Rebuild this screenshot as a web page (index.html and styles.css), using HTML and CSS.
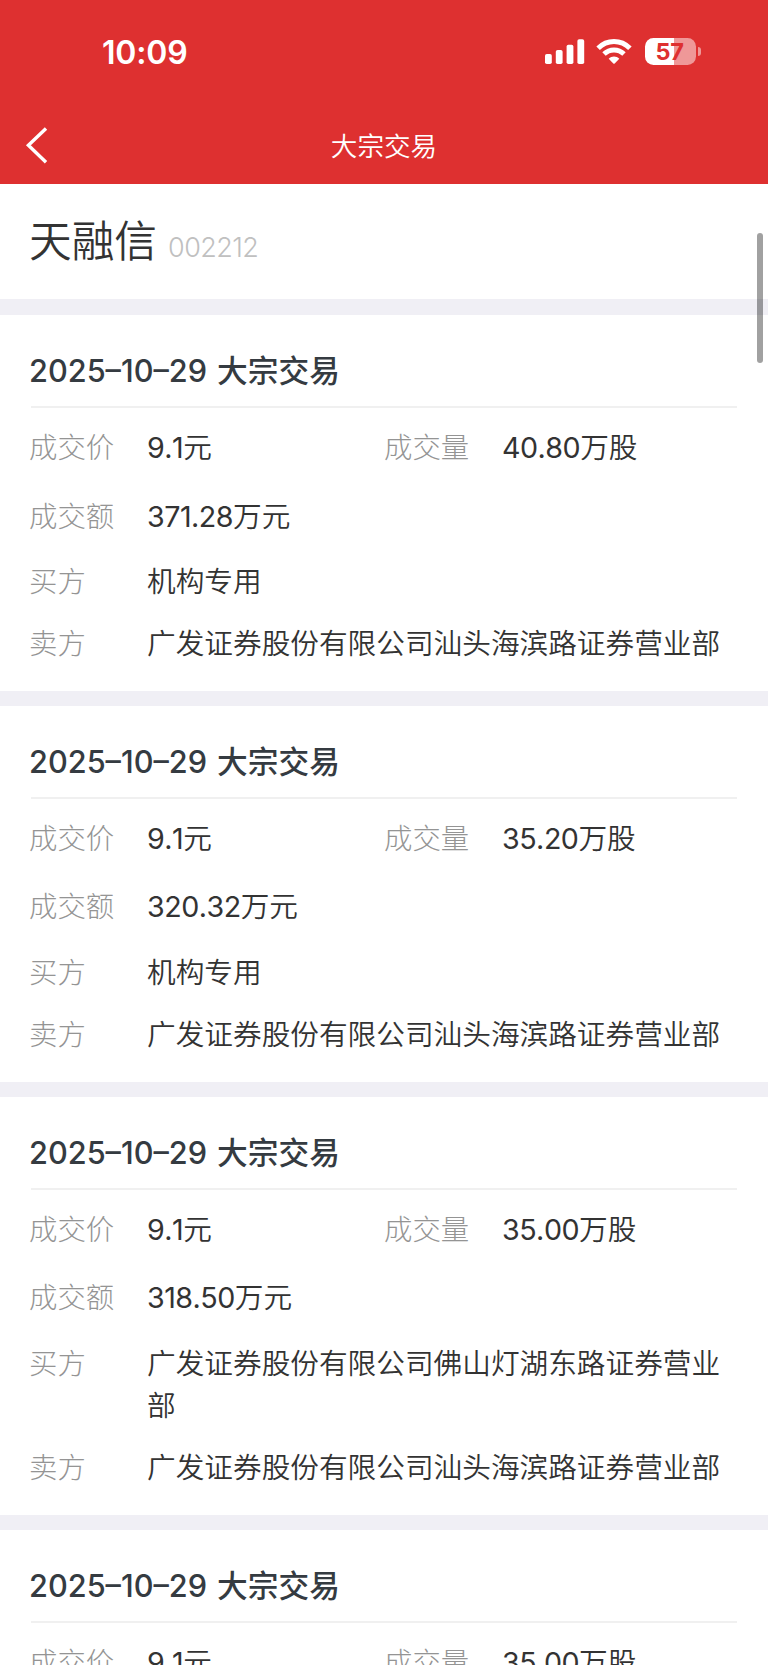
FILE: index.html
```html
<!DOCTYPE html>
<html lang="zh-CN">
<head>
<meta charset="utf-8">
<title>大宗交易</title>
<link rel="stylesheet" href="styles.css">
</head>
<body>
<header class="top">
  <div class="status">
    <span class="time">10:09</span>
    <div class="indicators">
      <svg class="signal" width="40" height="27" viewBox="0 0 40 27" fill="#fff">
        <rect x="0" y="16" width="6.8" height="10" rx="1.8"/>
        <rect x="10.8" y="12" width="6.8" height="14" rx="1.8"/>
        <rect x="21.6" y="6.8" width="6.8" height="19.2" rx="1.8"/>
        <rect x="32.4" y="1.3" width="6.8" height="24.7" rx="1.8"/>
      </svg>
      <svg class="wifi" width="36" height="27" viewBox="0 0 36 27" fill="none" stroke="#fff" stroke-width="4.9">
        <path d="M2.1 10.2C11 1.200 25 1.200 33.900 10.200"/>
        <path d="M8 16.100C13.600 10.700 22.400 10.700 28 16.100"/>
        <path d="M12.700 20.700C15.600 17.700 20.400 17.700 23.300 20.700L18.700 25.400Q18 26 17.300 25.400Z" fill="#fff" stroke="none"/>
      </svg>
      <div class="battery"><div class="cell"><span>57</span></div><i class="cap"></i></div>
    </div>
  </div>
  <nav class="nav">
    <svg class="back" width="24" height="38" viewBox="0 0 24 38" fill="none" stroke="#fff" stroke-width="3.4"><path d="M21 2.500L3.400 19.300L21 36.200"/></svg>
    <h1>大宗交易</h1>
  </nav>
</header>
<section class="stock"><span class="name">天融信</span><span class="code">002212</span></section>
<main>
  <article class="card">
    <h2><span class="date">2025–10–29</span>大宗交易</h2>
    <dl>
      <div class="row price"><dt>成交价</dt><dd><b>9.1</b>元</dd><dt>成交量</dt><dd><b>40.80</b>万股</dd></div>
      <div class="row amount"><dt>成交额</dt><dd><b>371.28</b>万元</dd></div>
      <div class="row party"><dt>买方</dt><dd>机构专用</dd></div>
      <div class="row party"><dt>卖方</dt><dd>广发证券股份有限公司汕头海滨路证券营业部</dd></div>
    </dl>
  </article>
  <article class="card">
    <h2><span class="date">2025–10–29</span>大宗交易</h2>
    <dl>
      <div class="row price"><dt>成交价</dt><dd><b>9.1</b>元</dd><dt>成交量</dt><dd><b>35.20</b>万股</dd></div>
      <div class="row amount"><dt>成交额</dt><dd><b>320.32</b>万元</dd></div>
      <div class="row party"><dt>买方</dt><dd>机构专用</dd></div>
      <div class="row party"><dt>卖方</dt><dd>广发证券股份有限公司汕头海滨路证券营业部</dd></div>
    </dl>
  </article>
  <article class="card">
    <h2><span class="date">2025–10–29</span>大宗交易</h2>
    <dl>
      <div class="row price"><dt>成交价</dt><dd><b>9.1</b>元</dd><dt>成交量</dt><dd><b>35.00</b>万股</dd></div>
      <div class="row amount"><dt>成交额</dt><dd><b>318.50</b>万元</dd></div>
      <div class="row party"><dt>买方</dt><dd>广发证券股份有限公司佛山灯湖东路证券营业部</dd></div>
      <div class="row party"><dt>卖方</dt><dd>广发证券股份有限公司汕头海滨路证券营业部</dd></div>
    </dl>
  </article>
  <article class="card">
    <h2><span class="date">2025–10–29</span>大宗交易</h2>
    <dl>
      <div class="row price"><dt>成交价</dt><dd><b>9.1</b>元</dd><dt>成交量</dt><dd><b>35.00</b>万股</dd></div>
    </dl>
  </article>
</main>
<div class="scrollbar"></div>
</body>
</html>
```
FILE: styles.css
```css
* { box-sizing: border-box; margin: 0; padding: 0; }
html { height: 1665px; overflow: hidden; }
body {
  position: relative;
  width: 768px;
  height: 1665px;
  overflow: hidden;
  background: #fff;
  color: #333;
  font-family: "Noto Sans CJK SC", sans-serif;
}
.top { height: 184px; background: #de3030; color: #fff; }
.status {
  height: 104px;
  padding: 0 67px 0 102px;
  display: flex;
  justify-content: space-between;
  align-items: center;
}
.time { padding-top: 2px; font: 600 32px/40px Inter, sans-serif; letter-spacing: -0.2px; }
.indicators { display: flex; align-items: center; margin-top: -1px; }
.wifi { margin-left: 11px; }
.battery { display: flex; align-items: center; margin-left: 13px; }
.cell {
  width: 51px;
  height: 27px;
  padding-right: 2px;
  border-radius: 8.5px;
  background: linear-gradient(90deg, #fff 57%, #ef9898 57%);
  color: #de3030;
  text-align: center;
  font: 700 23.5px/27px Inter, sans-serif;
  letter-spacing: -0.3px;
}
.cap { width: 3px; height: 9px; margin-left: 2px; border-radius: 0 4px 4px 0; background: #ef9898; }
.nav { height: 80px; padding-top: 2px; display: grid; grid-template-columns: 100px 1fr 100px; align-items: center; }
.back { margin-left: 25px; }
.nav h1 { text-align: center; font-size: 26.6px; font-weight: 350; line-height: 40px; }
.stock { height: 115px; padding: 21px 29px 0; display: flex; align-items: baseline; }
.name { font-size: 42.7px; font-weight: 350; line-height: 66px; }
.code { margin-left: 11px; color: #c0c0c0; font: 300 27px/40px Inter, sans-serif; font-kerning: none; letter-spacing: -0.6px; }
.card { border-top: 15.3px solid #f0eff5; padding: 0 31px 17.9px; }
.card:first-child { border-top-width: 16px; }
.card h2 {
  height: 93px;
  margin: 0 0 5px;
  padding-top: 32px;
  border-bottom: 2px solid #f0f0f0;
  color: #353b41;
  font-size: 30.7px;
  font-weight: 500;
  line-height: 43px;
  white-space: nowrap;
}
.date { margin: 0 10px 0 -2px; font-family: Inter, sans-serif; font-kerning: none; line-height: 0; letter-spacing: 0; }
.row { display: grid; grid-template-columns: 118px 1fr; margin-left: -2px; line-height: 42.7px; }
.row dt { color: #949494; font-size: 28.4px; font-weight: 300; }
.row dd { font-size: 28.66px; font-weight: 350; }
.row b { font-family: Inter, sans-serif; font-weight: 400; font-kerning: none; line-height: 0; letter-spacing: -0.5px; }
.price { grid-template-columns: 118px 237px 118px 1fr; padding: 12.4px 0 12px; }
.amount { padding: 13.6px 0 13.5px; }
.party { padding: 9.4px 0; }
.scrollbar {
  position: absolute;
  top: 233px;
  left: 757px;
  width: 6px;
  height: 130px;
  border-radius: 3px;
  background: rgba(0, 0, 0, 0.37);
}
```
